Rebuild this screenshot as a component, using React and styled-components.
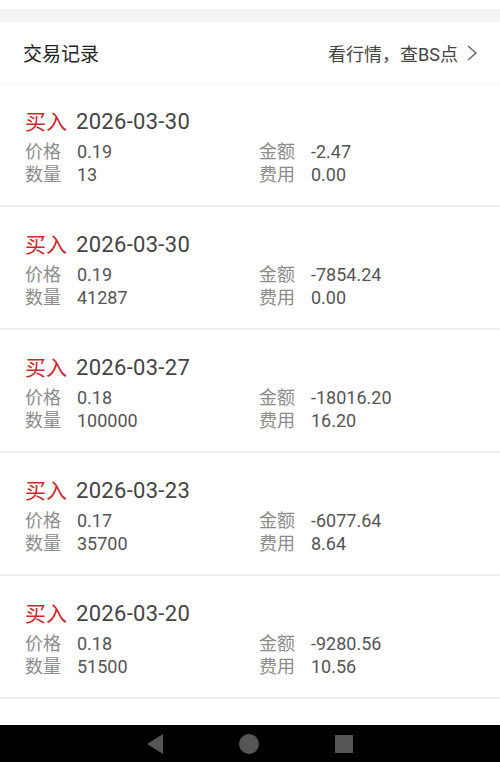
import React from 'react'
import styled, { createGlobalStyle } from 'styled-components'

const GlobalStyle = createGlobalStyle`
  html, body {
    margin: 0;
    padding: 0;
    background: #fff;
  }
  body {
    font-family: Roboto, "Noto Sans CJK SC", sans-serif;
  }
`

const Page = styled.div`
  width: 500px;
  height: 762px;
  display: flex;
  flex-direction: column;
  background: #fff;
  overflow: hidden;
`

const TopBand = styled.div`
  margin-top: 9px;
  height: 13px;
  background: #f4f4f4;
`

const Header = styled.div`
  height: 61px;
  display: flex;
  align-items: center;
  justify-content: space-between;
  padding: 0 22px 0 23px;
  border-bottom: 1px solid #f6f6f6;
`

const Title = styled.div`
  font-size: 19px;
  color: #222;
`

const HeaderLink = styled.div`
  display: flex;
  align-items: center;
  gap: 8px;
  font-size: 18px;
  color: #444;
`

const List = styled.div`
  flex: 1;
`

const Card = styled.div`
  box-sizing: border-box;
  height: 123px;
  padding: 24px 0 0 25px;
  border-bottom: 2px solid #efefef;
`

const TradeHead = styled.div`
  display: flex;
  align-items: center;
  height: 28px;
  margin-bottom: 4px;
  gap: 9px;
`

const Side = styled.span`
  font-size: 21px;
  line-height: 28px;
  color: ${p => (p.sell ? '#1f9d55' : '#cc2a31')};
`

const Date = styled.span`
  font-size: 22px;
  line-height: 28px;
  color: #444;
  letter-spacing: 0.3px;
`

const Fields = styled.div`
  display: grid;
  grid-template-columns: 234px 1fr;
  grid-auto-rows: 23px;
`

const Field = styled.div`
  display: flex;
  align-items: center;
`

const Label = styled.span`
  width: 52px;
  font-size: 18px;
  line-height: 23px;
  color: #8c8c8c;
`

const Value = styled.span`
  font-size: 18px;
  line-height: 23px;
  color: #555;
`

const NavBar = styled.div`
  height: 37px;
  background: #000;
  display: flex;
  align-items: center;
  justify-content: center;
  gap: 76px;
`

const trades = [
  { date: '2026-03-30', price: '0.19', amount: '-2.47', qty: '13', fee: '0.00' },
  { date: '2026-03-30', price: '0.19', amount: '-7854.24', qty: '41287', fee: '0.00' },
  { date: '2026-03-27', price: '0.18', amount: '-18016.20', qty: '100000', fee: '16.20' },
  { date: '2026-03-23', price: '0.17', amount: '-6077.64', qty: '35700', fee: '8.64' },
  { date: '2026-03-20', price: '0.18', amount: '-9280.56', qty: '51500', fee: '10.56' },
]

const Chevron = () => (
  <svg width="12" height="18" viewBox="0 0 12 18">
    <polyline points="2,2 10,9 2,16" fill="none" stroke="#666" strokeWidth="1.4" />
  </svg>
)

const App = () => (
  <Page>
    <GlobalStyle />
    <TopBand />
    <Header>
      <Title>交易记录</Title>
      <HeaderLink>
        看行情，查BS点
        <Chevron />
      </HeaderLink>
    </Header>
    <List>
      {trades.map((t, i) => (
        <Card key={i}>
          <TradeHead>
            <Side>买入</Side>
            <Date>{t.date}</Date>
          </TradeHead>
          <Fields>
            <Field>
              <Label>价格</Label>
              <Value>{t.price}</Value>
            </Field>
            <Field>
              <Label>金额</Label>
              <Value>{t.amount}</Value>
            </Field>
            <Field>
              <Label>数量</Label>
              <Value>{t.qty}</Value>
            </Field>
            <Field>
              <Label>费用</Label>
              <Value>{t.fee}</Value>
            </Field>
          </Fields>
        </Card>
      ))}
    </List>
    <NavBar>
      <svg width="16" height="20" viewBox="0 0 16 20">
        <polygon points="16,0 16,20 0,10" fill="#555" />
      </svg>
      <svg width="20" height="20" viewBox="0 0 20 20">
        <circle cx="10" cy="10" r="10" fill="#555" />
      </svg>
      <svg width="18" height="18" viewBox="0 0 18 18">
        <rect width="18" height="18" fill="#555" />
      </svg>
    </NavBar>
  </Page>
)

export default App
